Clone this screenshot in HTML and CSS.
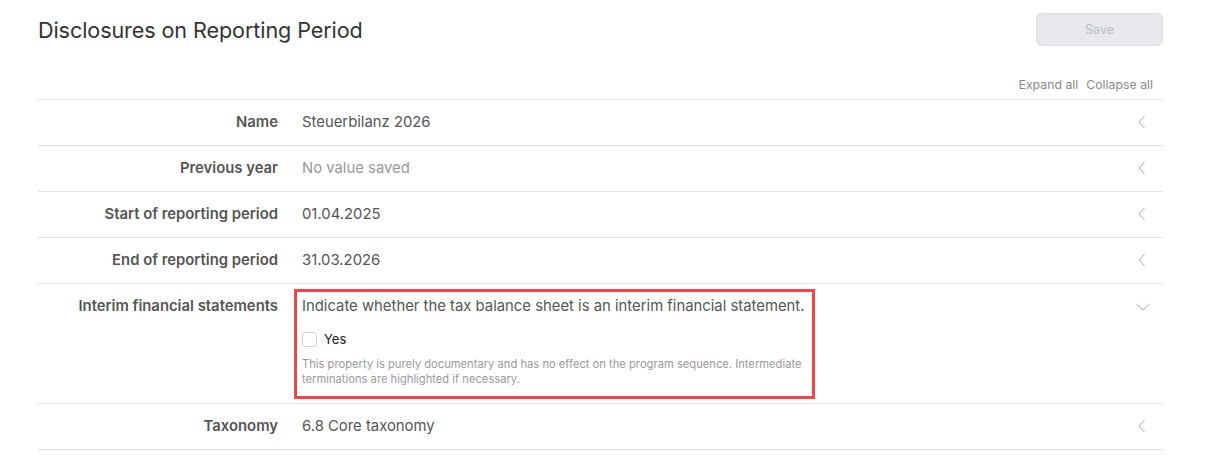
FILE: index.html
```html
<!DOCTYPE html>
<html lang="en">
<head>
<meta charset="utf-8">
<title>Disclosures on Reporting Period</title>
<link rel="stylesheet" href="styles.css">
</head>
<body>
<main class="page">
  <header class="header">
    <h1 class="title">Disclosures on Reporting Period</h1>
    <button class="save" type="button" disabled>Save</button>
  </header>
  <div class="toolbar">
    <a class="toolbar-link">Expand all</a>
    <a class="toolbar-link">Collapse all</a>
  </div>
  <div class="list">
    <div class="row">
      <div class="label">Name</div>
      <div class="value">Steuerbilanz 2026</div>
      <svg class="chev" viewBox="0 0 14 14"><path d="M9.5 1 L4 7 L9.5 13"/></svg>
    </div>
    <div class="row">
      <div class="label">Previous year</div>
      <div class="value muted">No value saved</div>
      <svg class="chev" viewBox="0 0 14 14"><path d="M9.5 1 L4 7 L9.5 13"/></svg>
    </div>
    <div class="row">
      <div class="label">Start of reporting period</div>
      <div class="value">01.04.2025</div>
      <svg class="chev" viewBox="0 0 14 14"><path d="M9.5 1 L4 7 L9.5 13"/></svg>
    </div>
    <div class="row">
      <div class="label">End of reporting period</div>
      <div class="value">31.03.2026</div>
      <svg class="chev" viewBox="0 0 14 14"><path d="M9.5 1 L4 7 L9.5 13"/></svg>
    </div>
    <div class="row open">
      <div class="label">Interim financial statements</div>
      <div class="value">
        <div class="annot">
          <div class="question">Indicate whether the tax balance sheet is an interim financial statement.</div>
          <label class="check"><span class="box"></span><span class="check-text">Yes</span></label>
          <p class="help">This property is purely documentary and has no effect on the program sequence. Intermediate terminations are highlighted if necessary.</p>
        </div>
      </div>
      <svg class="chev down" viewBox="0 0 14 14"><path d="M0.5 4 L7 10 L13.5 4"/></svg>
    </div>
    <div class="row">
      <div class="label">Taxonomy</div>
      <div class="value">6.8 Core taxonomy</div>
      <svg class="chev" viewBox="0 0 14 14"><path d="M9.5 1 L4 7 L9.5 13"/></svg>
    </div>
  </div>
</main>
</body>
</html>
```

FILE: styles.css
```css
* { box-sizing: border-box; }
html, body { margin: 0; padding: 0; background: #fff; }
body {
  font-family: Inter, "Noto Sans", "Liberation Sans", sans-serif;
  color: #555;
  font-size: 14.85px;
}
.page { padding: 13px 42px 0 38px; }

.header {
  display: flex;
  align-items: center;
  justify-content: space-between;
  height: 33px;
}
.title {
  margin: 0;
  font-size: 21.6px;
  font-weight: 400;
  color: #333;
  letter-spacing: -0.1px;
}
.save {
  width: 127px;
  height: 33px;
  border: 1px solid #d9dce1;
  border-radius: 6px;
  background: #e6e8ec;
  color: #b9bdc4;
  font-family: inherit;
  font-size: 12.5px;
}

.toolbar {
  display: flex;
  justify-content: flex-end;
  gap: 8px;
  margin-top: 31px;
  margin-bottom: 6px;
  padding-right: 10px;
  line-height: 16px;
}
.toolbar-link { font-size: 12.3px; color: #8a8a8a; }

.list { border-top: 1px solid #e2e2e2; }
.row {
  display: flex;
  align-items: flex-start;
  padding: 12px 0;
  border-bottom: 1px solid #e2e2e2;
  line-height: 21px;
}
.label {
  width: 240px;
  flex: none;
  text-align: right;
  font-weight: 600;
  color: #555;
}
.value {
  flex: 1;
  margin-left: 24px;
  color: #555;
}
.muted { color: #999; }

.chev {
  flex: none;
  width: 14px;
  height: 14px;
  margin: 3px 14px 0 0;
  fill: none;
  stroke: #a3abb9;
  stroke-width: 1;
}
.chev.down { margin-top: 4px; margin-right: 13px; }

.annot {
  display: block;
  width: fit-content;
  margin: -7px 0 -8px -8px;
  padding: 4px 5px 9px 5px;
  border: 3px solid #f2444b;
}
.question { white-space: nowrap; color: #555; }
.check {
  display: flex;
  align-items: center;
  gap: 7px;
  margin-top: 13px;
  height: 18px;
}
.box {
  width: 15px;
  height: 15px;
  border: 1px solid #cfd3da;
  border-radius: 3px;
  background: #fff;
}
.check-text { font-size: 13px; color: #222; }
.help {
  margin: 9px 0 0;
  width: 505px;
  font-size: 11.2px;
  line-height: 15px;
  color: #9a9a9a;
}
```
